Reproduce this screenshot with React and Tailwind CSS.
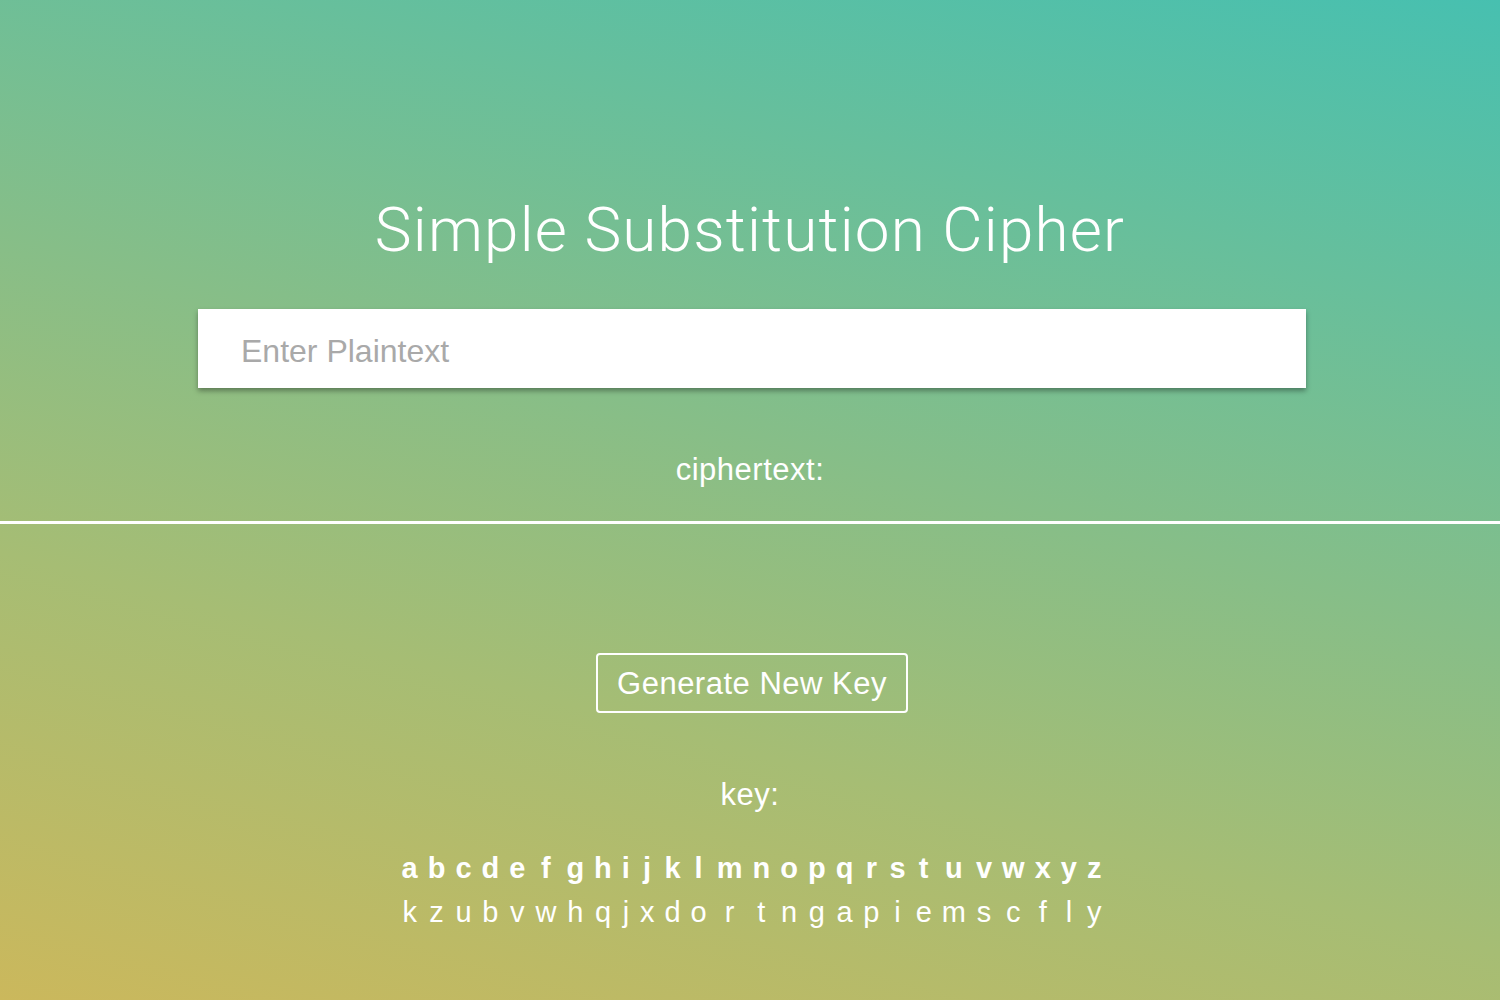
import { useState } from 'react';

const plain = 'abcdefghijklmnopqrstuvwxyz'.split('');
const cipher = 'kzubvwhqjxdortngapiemscfly'.split('');

const App = () => {
  const [text, setText] = useState('');

  return (
    <div
      className="min-h-screen w-full bg-[linear-gradient(15deg,#cbb85c_0%,#a6bd74_32%,#47c0b0_100%)] text-white"
      style={{ fontFamily: '"Liberation Sans", Arial, sans-serif' }}
    >
      <div className="flex flex-col items-center pt-[194px]">
        <h1 className="font-['Roboto',sans-serif] text-[62px] font-light leading-[72px] tracking-[1.2px]">
          Simple Substitution Cipher
        </h1>
        <input
          placeholder="Enter Plaintext"
          value={text}
          onChange={(e) => setText(e.target.value)}
          className="ml-[4px] mt-[43px] h-[79px] w-[1108px] bg-white px-[43px] pt-[6px] text-[32px] text-gray-700 shadow-[0_3px_5px_rgba(0,0,0,0.35)] outline-none placeholder:text-[#a9a9a9]"
        />
        <p className="mt-[65px] text-[31px] leading-[34px] tracking-[0.5px]">ciphertext:</p>
      </div>

      <div className="mt-[34px] h-[3px] w-full bg-white" />

      <div className="flex flex-col items-center pb-[66px]">
        <button
          type="button"
          className="ml-[4px] mt-[129px] h-[60px] w-[312px] rounded-[4px] border-2 border-white text-[31px] leading-none tracking-[0.5px]"
        >
          Generate New Key
        </button>
        <p className="mt-[65px] text-[31px] leading-[34px] tracking-[0.5px]">key:</p>
        <div className="ml-[3px] mt-[34px] flex">
          {plain.map((p, i) => (
            <div key={p} className="flex flex-col items-center px-[5px] text-[29px] leading-[44px]">
              <span className="font-bold">{p}</span>
              <span>{cipher[i]}</span>
            </div>
          ))}
        </div>
      </div>
    </div>
  );
};

export default App;
